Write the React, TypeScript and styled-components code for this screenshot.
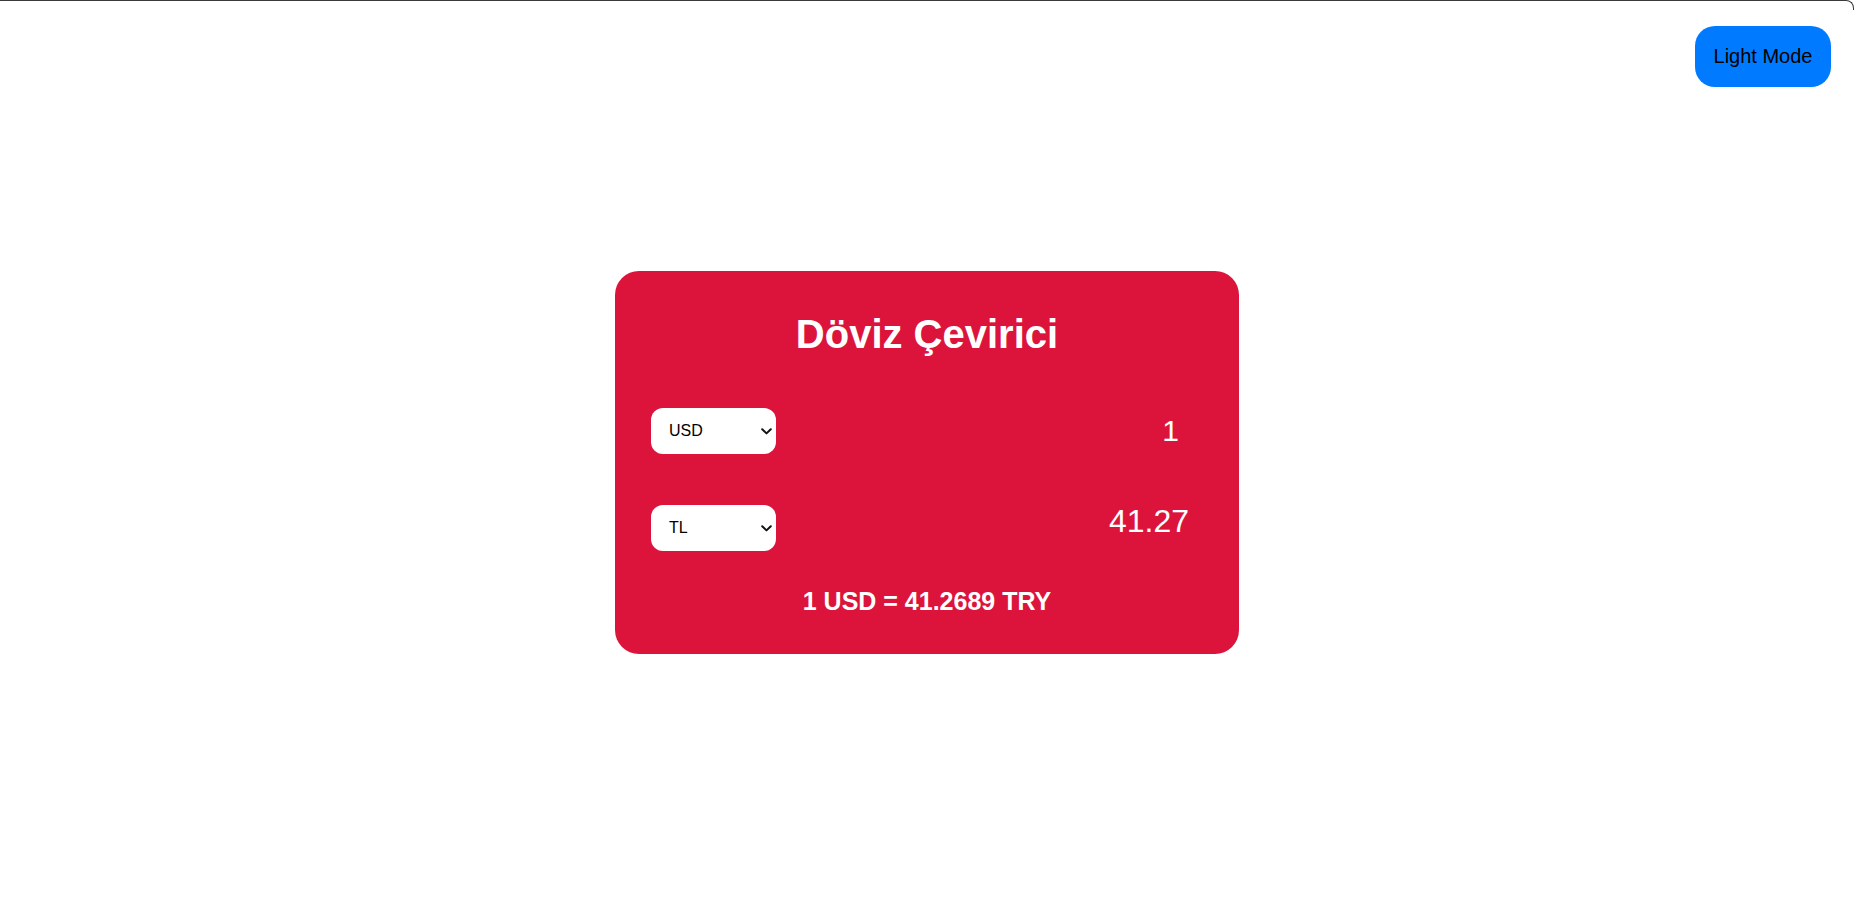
import React, { useState } from "react";
import styled, { createGlobalStyle } from "styled-components";

const GlobalStyle = createGlobalStyle`
  html, body {
    margin: 0;
    padding: 0;
    background: #ffffff;
    font-family: "Liberation Sans", Arial, sans-serif;
  }
  * { box-sizing: border-box; }
`;

const Frame = styled.div`
  position: fixed;
  top: 0;
  left: 0;
  right: 0;
  height: 10px;
  border-top: 1px solid #3a3a3a;
  border-right: 1px solid #3a3a3a;
  border-top-right-radius: 8px;
  pointer-events: none;
`;

const Page = styled.main`
  min-height: 918px;
  padding-top: 6px;
  display: flex;
  align-items: center;
  justify-content: center;
`;

const ModeButton = styled.button`
  position: absolute;
  top: 26px;
  right: 23px;
  width: 136px;
  height: 61px;
  border: none;
  border-radius: 20px;
  background: #007bff;
  color: #000;
  font-family: "Liberation Sans", Arial, sans-serif;
  font-size: 20px;
  cursor: pointer;
`;

const Card = styled.section`
  width: 624px;
  height: 383px;
  background: #dc143c;
  border-radius: 24px;
  padding: 40px 36px 0 36px;
  display: flex;
  flex-direction: column;
  color: #fff;
`;

const Title = styled.h1`
  margin: 0;
  text-align: center;
  font-size: 40px;
  font-weight: bold;
  line-height: 46px;
`;

const Rows = styled.div`
  margin-top: 51px;
  display: flex;
  flex-direction: column;
  gap: 51px;
`;

const Row = styled.div`
  display: flex;
  align-items: center;
  justify-content: space-between;
  height: 46px;
`;

const SelectWrap = styled.div`
  position: relative;
  width: 125px;
  height: 46px;
`;

const Select = styled.select`
  appearance: none;
  -webkit-appearance: none;
  width: 100%;
  height: 100%;
  border: none;
  border-radius: 12px;
  background: #fff;
  color: #000;
  font-family: "Liberation Sans", Arial, sans-serif;
  font-size: 16px;
  padding: 0 20px 0 18px;
  outline: none;
`;

const Chevron = styled.svg`
  position: absolute;
  right: 4px;
  top: 50%;
  width: 11px;
  height: 7px;
  margin-top: -3px;
  pointer-events: none;
`;

const Amount = styled.input<{ $inset: number; $size: number; $lift: number }>`
  width: 220px;
  background: transparent;
  border: none;
  outline: none;
  color: #fff;
  text-align: right;
  font-family: "Liberation Sans", Arial, sans-serif;
  font-size: ${(p) => p.$size}px;
  padding: 0 ${(p) => p.$inset}px 0 0;
  margin-bottom: ${(p) => p.$lift}px;
`;

const Rate = styled.p`
  margin: 36px 0 0 0;
  text-align: center;
  font-size: 25px;
  font-weight: bold;
`;

function CurrencySelect({
  value,
  onChange,
  options,
}: {
  value: string;
  onChange: (v: string) => void;
  options: string[];
}) {
  return (
    <SelectWrap>
      <Select value={value} onChange={(e) => onChange(e.target.value)}>
        {options.map((o) => (
          <option key={o} value={o}>
            {o}
          </option>
        ))}
      </Select>
      <Chevron viewBox="0 0 11 7">
        <path
          d="M1.2 1.2 L5.5 5.4 L9.8 1.2"
          fill="none"
          stroke="#111"
          strokeWidth="2"
          strokeLinecap="round"
          strokeLinejoin="round"
        />
      </Chevron>
    </SelectWrap>
  );
}

export default function App() {
  const [from, setFrom] = useState("USD");
  const [to, setTo] = useState("TL");
  const [amount, setAmount] = useState("1");
  const rate = 41.2689;
  const result = (parseFloat(amount || "0") * rate).toFixed(2);

  return (
    <>
      <GlobalStyle />
      <Frame />
      <ModeButton>Light Mode</ModeButton>
      <Page>
        <Card>
          <Title>Döviz Çevirici</Title>
          <Rows>
            <Row>
              <CurrencySelect
                value={from}
                onChange={setFrom}
                options={["USD", "EUR", "TL"]}
              />
              <Amount
                $inset={24}
                $size={30}
                $lift={0}
                value={amount}
                onChange={(e) => setAmount(e.target.value)}
              />
            </Row>
            <Row>
              <CurrencySelect
                value={to}
                onChange={setTo}
                options={["TL", "USD", "EUR"]}
              />
              <Amount $inset={14} $size={32} $lift={12} value={result} readOnly />
            </Row>
          </Rows>
          <Rate>1 USD = {rate} TRY</Rate>
        </Card>
      </Page>
    </>
  );
}
